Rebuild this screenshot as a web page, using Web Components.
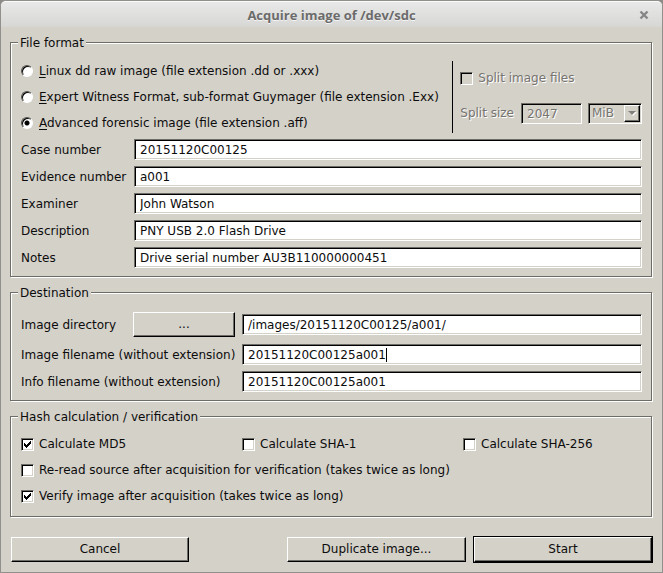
<!DOCTYPE html>
<html lang="en">
<head>
<meta charset="utf-8">
<title>Acquire image of /dev/sdc</title>
<style>
  html { background: #8c8b88; }
  body {
    margin: 0;
    font: 12px/15px "DejaVu Sans", sans-serif;
    color: #0c0c0c;
    --face: #d4d1c9;
    --shade: #6e6c67;
    --dim: #76746f;
  }
  .fields { display: grid; gap: 6px; }
  .case { --label: 106px; }
  .destination { --label: 214px; }
  .top { display: flex; margin-bottom: 6px; }
  format-choice { flex: 1; }
  .hashes { display: grid; gap: 8px 0; grid-template-columns: 221fr 221fr 179fr; }
  .wide { grid-column: 1 / -1; }
  .directory { min-height: 27px; }
  .browse { width: 102px; }
  group-box.last { --pad-bottom: 11px; }
  .actions { display: grid; grid-template-columns: 178fr 84px 179fr 180fr; column-gap: 7px; align-items: center; margin: 19px -1px 0 1px; }
  .actions .second { grid-column: 3; }
</style>
</head>
<body>
<dialog-window caption="Acquire image of /dev/sdc">
  <group-box caption="File format">
    <div class="top">
      <format-choice></format-choice>
      <split-options></split-options>
    </div>
    <div class="fields case">
      <text-field label="Case number" value="20151120C00125"></text-field>
      <text-field label="Evidence number" value="a001"></text-field>
      <text-field label="Examiner" value="John Watson"></text-field>
      <text-field label="Description" value="PNY USB 2.0 Flash Drive"></text-field>
      <text-field label="Notes" value="Drive serial number AU3B110000000451"></text-field>
    </div>
  </group-box>
  <group-box caption="Destination">
    <div class="fields destination">
      <text-field class="directory" label="Image directory" value="/images/20151120C00125/a001/">
        <push-button class="browse">...</push-button>
      </text-field>
      <text-field label="Image filename (without extension)" value="20151120C00125a001" active></text-field>
      <text-field label="Info filename (without extension)" value="20151120C00125a001"></text-field>
    </div>
  </group-box>
  <group-box class="last" caption="Hash calculation / verification">
    <div class="hashes">
      <tick-box checked>Calculate MD5</tick-box>
      <tick-box>Calculate SHA-1</tick-box>
      <tick-box>Calculate SHA-256</tick-box>
      <tick-box class="wide">Re-read source after acquisition for verification (takes twice as long)</tick-box>
      <tick-box class="wide" checked>Verify image after acquisition (takes twice as long)</tick-box>
    </div>
  </group-box>
  <div class="actions">
    <push-button>Cancel</push-button>
    <push-button class="second">Duplicate image...</push-button>
    <push-button default>Start</push-button>
  </div>
</dialog-window>

<script>
const base = `
  * { box-sizing: border-box; }
  input, select, button { font: inherit; color: inherit; margin: 0; border-radius: 0; appearance: none; outline: none; }
  .sunken {
    border: 1px solid; border-color: var(--shade) #fff #fff var(--shade);
    box-shadow: inset 1px 1px #000, inset -1px -1px #d4d1c9;
    background: #fff;
  }
  .raised {
    border: 1px solid; border-color: #fff #000 #000 #fff;
    box-shadow: inset -1px -1px var(--shade);
    background: var(--face);
  }
  .tick { width: 13px; height: 13px; flex: none; display: block; }
  .tick:checked {
    background: #fff url("data:image/svg+xml,%3Csvg xmlns='http://www.w3.org/2000/svg' width='11' height='11' shape-rendering='crispEdges'%3E%3Cpath d='M2 4h1v1h1v1h1v-1h1v-1h1v-1h1v-1h1v3h-1v1h-1v1h-1v1h-1v1h-1v-1h-1v-1h-1z'/%3E%3C/svg%3E");
  }
  .off { color: var(--dim); text-shadow: 1px 1px #fff; }
`;

function define(name, css, render, ready) {
  customElements.define(name, class extends HTMLElement {
    constructor() {
      super();
      this.attachShadow({ mode: "open" });
    }
    connectedCallback() {
      if (this.shadowRoot.firstChild) return;
      this.shadowRoot.innerHTML = `<style>${base}${css}</style>${render(this)}`;
      if (ready) ready(this);
    }
  });
}

define("dialog-window", `
  :host {
    display: block; min-height: 100vh; box-sizing: border-box;
    border: 1px solid #92908c; border-radius: 6px 6px 0 0;
    background: var(--face);
  }
  header {
    display: grid; grid-template-columns: 24px 1fr 24px; align-items: center;
    height: 27px; padding: 0 6px; border-top: 1px solid #fafafa; border-radius: 5px 5px 0 0;
    background: linear-gradient(#e8e8e8, #d8d8d6 90%, var(--face));
  }
  h1 { grid-column: 2; margin: 0; text-align: center; font: bold 13px/20px "Open Sans", "Noto Sans", sans-serif; color: #6b6b6b; text-shadow: 0 1px #f4f4f4; }
  button { display: grid; place-items: center; width: 24px; height: 18px; padding: 0; border: 0; background: none; }
  svg { display: block; }
  main { padding: 6px 10px 9px 9px; }
`, el => `
  <header>
    <h1>${el.getAttribute("caption")}</h1>
    <button aria-label="Close"><svg width="10" height="10" viewBox="0 0 10 10"><path d="M1.5 1.5 8.5 8.5M8.5 1.5 1.5 8.5" stroke="#858585" stroke-width="2.4"/></svg></button>
  </header>
  <main><slot></slot></main>
`);

define("group-box", `
  :host { display: block; }
  :host(:not(:first-of-type)) { margin-top: 7px; }
  fieldset {
    min-width: 0; margin: 0; padding: 10px 9px var(--pad-bottom, 8px) 10px;
    border: 1px solid var(--shade);
    box-shadow: 1px 1px #fff, inset 1px 1px #fff;
  }
  legend { margin-left: -3px; padding: 2px 2px 0; background: var(--face); }
`, el => `<fieldset><legend>${el.getAttribute("caption")}</legend><slot></slot></fieldset>`);

define("format-choice", `
  :host { display: grid; gap: 6px; }
  label { display: flex; align-items: center; gap: 6px; height: 20px; }
  u { text-underline-offset: 2px; text-decoration-thickness: 1px; text-decoration-skip-ink: none; }
  input {
    width: 12px; height: 12px; flex: none; border-radius: 50%;
    border: 1px solid; border-color: #55534f #fff #fff #55534f;
    box-shadow: inset 1px 1px #000;
    background: #fff;
  }
  input:checked { background: radial-gradient(circle at 50% 50%, #000 2px, #fff 3px); }
`, () => `
  <label><input type="radio" name="format"><span><u>L</u>inux dd raw image (file extension .dd or .xxx)</span></label>
  <label><input type="radio" name="format"><span><u>E</u>xpert Witness Format, sub-format Guymager (file extension .Exx)</span></label>
  <label><input type="radio" name="format" checked><span><u>A</u>dvanced forensic image (file extension .aff)</span></label>
`);

define("split-options", `
  :host { display: flex; flex-direction: column; justify-content: space-between; padding: 7px 0 9px 7px; border-left: 1px solid #000; }
  .check { display: flex; align-items: center; gap: 5px; height: 20px; }
  .size { display: flex; align-items: center; gap: 6px; height: 21px; }
  .size label { margin-right: 1px; }
  .sunken { background: var(--face); }
  .amount { width: 61px; height: 21px; padding: 0 5px; opacity: 1; }
  .unit { position: relative; width: 54px; height: 21px; }
  select { display: block; width: 100%; height: 21px; padding: 0 3px; opacity: 1; }
  .arrow { position: absolute; top: 2px; right: 2px; width: 16px; height: 17px; display: grid; place-items: center; pointer-events: none; }
`, () => `
  <label class="check off"><input class="tick sunken" type="checkbox" disabled>Split image files</label>
  <div class="size">
    <label class="off" for="amount">Split size</label>
    <input id="amount" class="amount sunken off" value="2047" disabled>
    <div class="unit">
      <select class="sunken off" aria-label="Split size unit" disabled><option>MiB</option></select>
      <span class="arrow raised"><svg width="9" height="6" viewBox="0 0 9 6"><path d="M1 1h8L5 5z" fill="#fff"/><path d="M0 0h8L4 4z" fill="#82807a"/></svg></span>
    </div>
  </div>
`);

define("text-field", `
  :host { display: flex; align-items: center; gap: 7px; }
  .lead { display: flex; align-items: center; width: var(--label); flex: none; white-space: nowrap; }
  label { flex: 1; padding-top: 2px; }
  .box { position: relative; flex: 1; min-width: 0; }
  input { display: block; width: 100%; height: 21px; padding: 0 5px; }
  .caret { position: absolute; top: 4px; left: var(--caret); width: 1px; height: 14px; background: #000; pointer-events: none; }
`, el => `
  <div class="lead"><label for="entry">${el.getAttribute("label")}</label><slot></slot></div>
  <div class="box"><input id="entry" class="sunken" value="${el.getAttribute("value")}">${el.hasAttribute("active") ? '<span class="caret"></span>' : ""}</div>
`, el => {
  // The insertion mark sits right after the last character of the active entry.
  const caret = el.shadowRoot.querySelector(".caret");
  if (!caret) return;
  const pen = document.createElement("canvas").getContext("2d");
  pen.font = '12px "DejaVu Sans", sans-serif';
  caret.style.setProperty("--caret", Math.round(pen.measureText(el.getAttribute("value")).width) + 6 + "px");
});

define("tick-box", `
  :host { display: block; }
  label { display: flex; width: max-content; align-items: center; gap: 5px; height: 18px; }
`, el => `<label><input class="tick sunken" type="checkbox"${el.hasAttribute("checked") ? " checked" : ""}><span><slot></slot></span></label>`);

define("push-button", `
  :host { display: block; }
  button { display: block; width: 100%; height: 25px; padding: 0 4px; }
  :host([default]) { border: 1px solid #000; }
`, () => `<button class="raised"><slot></slot></button>`);
</script>
</body>
</html>
